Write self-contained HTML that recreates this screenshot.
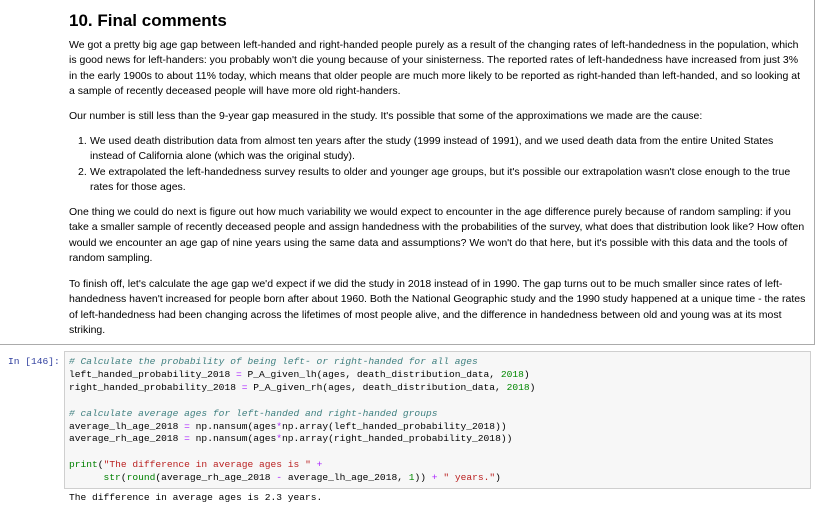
<!DOCTYPE html>
<html><head><meta charset="utf-8"><style>
body{margin:0;width:822px;height:517px;overflow:hidden;background:#fff;position:relative;font-family:"Liberation Sans",Arial,sans-serif;color:#000}
.md{position:absolute;left:-2px;top:-2px;width:815px;height:346px;border:1px solid #ababab;border-top:none}
h1{position:absolute;left:69px;top:11px;margin:0;font-size:17px;font-weight:bold}
.p{position:absolute;left:69px;font-size:10.5px;line-height:15.4px;white-space:nowrap}
.li{position:absolute;left:78px;font-size:10.5px;line-height:15.4px;white-space:nowrap}
.li span{display:inline-block;width:12px}
.prompt{position:absolute;left:8px;top:356px;font-family:"Liberation Mono",monospace;font-size:9.6px;color:#303f9f}
.code{position:absolute;left:64px;top:351px;width:745px;height:136px;background:#f7f7f7;border:1px solid #cfcfcf}
pre{margin:0;position:absolute;left:69px;top:356px;font-family:"Liberation Mono",monospace;font-size:9.6px;line-height:12.9px;color:#000}
.cm{color:#408080;font-style:italic}.n{color:#080}.o{color:#a2f}.s{color:#ba2121}.b{color:#008000}
.out{position:absolute;left:69px;top:492px;font-family:"Liberation Mono",monospace;font-size:9.6px}
</style></head><body>
<div class="md"></div>
<h1>10. Final comments</h1>
<div class="p" style="top:38px">We got a pretty big age gap between left-handed and right-handed people purely as a result of the changing rates of left-handedness in the population, which<br>is good news for left-handers: you probably won't die young because of your sinisterness. The reported rates of left-handedness have increased from just 3%<br>in the early 1900s to about 11% today, which means that older people are much more likely to be reported as right-handed than left-handed, and so looking at<br>a sample of recently deceased people will have more old right-handers.</div>
<div class="p" style="top:109px">Our number is still less than the 9-year gap measured in the study. It's possible that some of the approximations we made are the cause:</div>
<div class="li" style="top:134px"><span>1.</span>We used death distribution data from almost ten years after the study (1999 instead of 1991), and we used death data from the entire United States<br><span></span>instead of California alone (which was the original study).<br><span>2.</span>We extrapolated the left-handedness survey results to older and younger age groups, but it's possible our extrapolation wasn't close enough to the true<br><span></span>rates for those ages.</div>
<div class="p" style="top:205px">One thing we could do next is figure out how much variability we would expect to encounter in the age difference purely because of random sampling: if you<br>take a smaller sample of recently deceased people and assign handedness with the probabilities of the survey, what does that distribution look like? How often<br>would we encounter an age gap of nine years using the same data and assumptions? We won't do that here, but it's possible with this data and the tools of<br>random sampling.</div>
<div class="p" style="top:277px">To finish off, let's calculate the age gap we'd expect if we did the study in 2018 instead of in 1990. The gap turns out to be much smaller since rates of left-<br>handedness haven't increased for people born after about 1960. Both the National Geographic study and the 1990 study happened at a unique time - the rates<br>of left-handedness had been changing across the lifetimes of most people alive, and the difference in handedness between old and young was at its most<br>striking.</div>
<div class="prompt">In [146]:</div>
<div class="code"></div>
<pre><span class="cm"># Calculate the probability of being left- or right-handed for all ages</span>
left_handed_probability_2018 <span class="o">=</span> P_A_given_lh(ages, death_distribution_data, <span class="n">2018</span>)
right_handed_probability_2018 <span class="o">=</span> P_A_given_rh(ages, death_distribution_data, <span class="n">2018</span>)

<span class="cm"># calculate average ages for left-handed and right-handed groups</span>
average_lh_age_2018 <span class="o">=</span> np.nansum(ages<span class="o">*</span>np.array(left_handed_probability_2018))
average_rh_age_2018 <span class="o">=</span> np.nansum(ages<span class="o">*</span>np.array(right_handed_probability_2018))

<span class="b">print</span>(<span class="s">"The difference in average ages is "</span> <span class="o">+</span>
      <span class="b">str</span>(<span class="b">round</span>(average_rh_age_2018 <span class="o">-</span> average_lh_age_2018, <span class="n">1</span>)) <span class="o">+</span> <span class="s">" years."</span>)</pre>
<div class="out">The difference in average ages is 2.3 years.</div>
</body></html>
